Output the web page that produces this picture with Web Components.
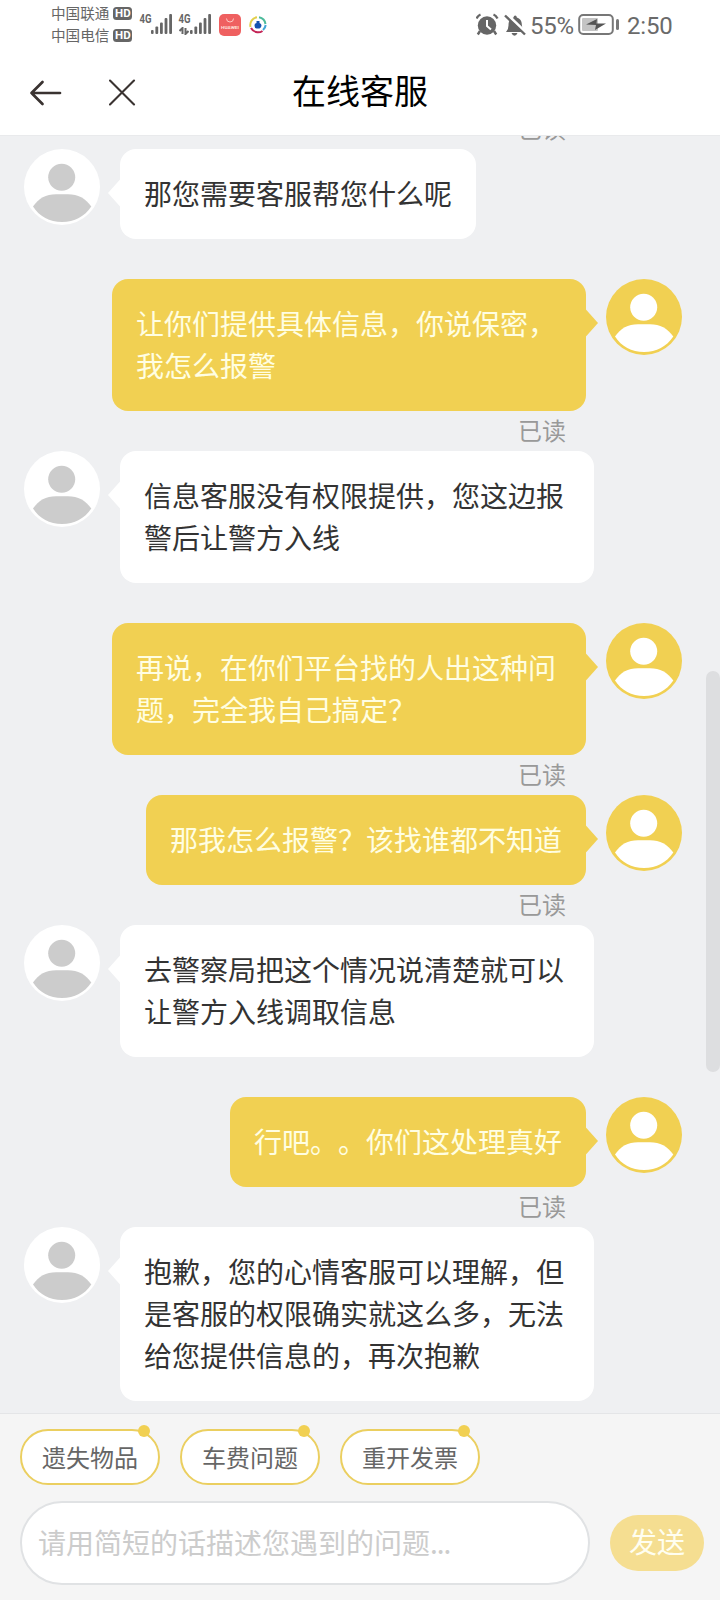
<!DOCTYPE html>
<html lang="zh-CN">
<head>
<meta charset="utf-8">
<title>在线客服</title>
<style>
html,body{margin:0;height:100%}
body{font-family:"Noto Sans CJK SC",sans-serif;background:#eff0f2;overflow:hidden;text-spacing-trim:space-all}
</style>
</head>
<body>
<chat-app>
  <status-bar slot="status"></status-bar>
  <nav-bar slot="nav">在线客服</nav-bar>
  <read-label>已读</read-label>
  <chat-message>那您需要客服帮您什么呢</chat-message>
  <chat-message mine>让你们提供具体信息，你说保密，我怎么报警</chat-message>
  <read-label>已读</read-label>
  <chat-message>信息客服没有权限提供，您这边报警后让警方入线</chat-message>
  <chat-message mine>再说，在你们平台找的人出这种问题，完全我自己搞定？</chat-message>
  <read-label>已读</read-label>
  <chat-message mine>那我怎么报警？该找谁都不知道</chat-message>
  <read-label>已读</read-label>
  <chat-message>去警察局把这个情况说清楚就可以让警方入线调取信息</chat-message>
  <chat-message mine>行吧。。你们这处理真好</chat-message>
  <read-label>已读</read-label>
  <chat-message>抱歉，您的心情客服可以理解，但是客服的权限确实就这么多，无法给您提供信息的，再次抱歉</chat-message>
  <chat-footer slot="footer">
    <quick-chip slot="chips">遗失物品</quick-chip>
    <quick-chip slot="chips">车费问题</quick-chip>
    <quick-chip slot="chips">重开发票</quick-chip>
  </chat-footer>
</chat-app>
<script>
const define = (name, html) => {
  const t = document.createElement('template');
  t.innerHTML = html;
  customElements.define(name, class extends HTMLElement {
    constructor() {
      super();
      this.attachShadow({mode: 'open'}).append(t.content.cloneNode(true));
    }
  });
};

define('chat-app', `
<style>
:host{display:flex;flex-direction:column;width:720px;height:1600px;background:#eff0f2}
main{flex:1;min-height:0;overflow:hidden;position:relative}
.list{display:flex;flex-direction:column;margin-top:13px}
.thumb{position:absolute;left:706px;top:535px;width:14px;height:401px;border-radius:7px;background:#dddee0}
</style>
<slot name="status"></slot><slot name="nav"></slot>
<main><div class="list"><slot></slot></div><div class="thumb"></div></main>
<slot name="footer"></slot>`);

define('hd-badge', `
<style>
:host{display:flex;align-items:center;justify-content:center;width:19px;height:13px;border-radius:3.5px;background:#666;color:#fff;font:bold 11.5px/13px Roboto,sans-serif}
</style><slot></slot>`);

define('signal-bars', `
<style>:host{display:block;width:24px;height:24px}svg{display:block;overflow:visible}text{font:bold 12.5px Roboto,sans-serif}</style>
<svg width="34" height="24" fill="#666">
<text x="-.5" y="11" textLength="12" lengthAdjust="spacingAndGlyphs">4G</text>
<g><rect x="11" y="18" width="2.6" height="4" rx="1"/><rect x="15.400" y="14.500" width="2.800" height="7.500" rx="1"/><rect x="20" y="10.500" width="2.800" height="11.500" rx="1"/><rect x="24.600" y="6" width="2.800" height="16" rx="1"/><rect x="29.200" y="2" width="2.800" height="20" rx="1"/></g>
</svg>`);

define('data-arrows', `
<style>:host{display:block;width:10px;height:8px}svg{display:block}</style>
<svg width="10" height="8" fill="none" stroke="#666" stroke-width="2"><path d="M3.5 7V1L.5 4M6.500 1v6l3-3"/></svg>`);

define('status-bar', `
<style>
:host{display:flex;align-items:flex-start;box-sizing:border-box;height:50px;padding:2px 0 0 51px;background:#fff;color:#666}
.carriers{display:flex;flex-direction:column}
.c{display:flex;align-items:center;gap:4px;height:22px;font-size:14.6px;line-height:22px;width:89px}
.sig{display:flex;width:39px;margin-top:10px;position:relative}
data-arrows{position:absolute;left:0;top:15px}
.app{margin:12px 0 0 1px}
.ring{margin:14px 0 0 8px}
svg{display:block}
.right{display:flex;align-items:center;margin-left:auto;height:46px;padding-right:49px}
.n{font:400 24px/30px Roboto,sans-serif;white-space:nowrap;width:44px;padding-top:2px;color:#6a6a6a;letter-spacing:-.2px}
</style>
<div class="carriers"><div class="c">中国联通<hd-badge>HD</hd-badge></div><div class="c">中国电信<hd-badge>HD</hd-badge></div></div>
<div class="sig"><signal-bars></signal-bars></div>
<div class="sig"><signal-bars></signal-bars><data-arrows></data-arrows></div>
<svg class="app" width="22" height="22"><rect width="22" height="22" rx="5" fill="#ef6060"/><path d="M7.500 4.500a3.500 3.500 0 0 0 7 0" fill="none" stroke="#ffc9c4" stroke-width="1"/><text x="2" y="14.500" textLength="18" lengthAdjust="spacingAndGlyphs" font-family="Roboto" font-size="4.200" font-weight="bold" fill="#ffe0dc">HUAWEI</text></svg>
<svg class="ring" width="18" height="18" fill="none" stroke-width="2"><path d="M8 1.200A8 8 0 0 0 1.500 11" stroke="#e2cf4a"/><path d="M10 1.200A8 8 0 0 1 16.500 8" stroke="#4dbb9b"/><path d="M16.700 9A8 8 0 0 1 14 14" stroke="#42a6d8"/><path d="M2 12A8 8 0 0 0 13.500 15" stroke="#c32455"/><path d="M7.500 5h3v2q2 .5 2 2.500T10.500 12.500h-3Q5.500 12 5.500 9.500T7.500 7z" fill="#1553b0"/></svg>
<div class="right">
<svg width="54" height="24" viewBox="0 0 54 24">
 <g fill="#666"><circle cx="11" cy="12.500" r="9.200"/><path d="M4 18l-2.200 3.500M18 18l2.200 3.500" stroke="#666" stroke-width="2.400"/></g>
 <path d="M.5 5.500Q2 2.500 4.500 1.500M21.500 5.500Q20 2.500 17.500 1.500" fill="none" stroke="#666" stroke-width="2.400"/>
 <path d="M11 7v6l4 3.500" fill="none" stroke="#fff" stroke-width="2"/>
 <path d="M30 19q2.500-2.500 2.500-6.500c0-5 2-7 5-8q.3-2 1.700-2t1.700 2c3 1 5 3 5 8q0 4 2.500 6.500z" fill="#666"/>
 <path d="M35.500 20h6q-1 2.700-3 2.700t-3-2.700" fill="#666"/>
 <path d="M30 .5l21 20" stroke="#fff" stroke-width="3"/><path d="M29 2.500l20 19" stroke="#666" stroke-width="2.400"/>
</svg>
<div class="n">55%</div>
<svg style="margin-left:4px" width="42" height="24" viewBox="0 0 42 24"><rect x="1.200" y="2" width="33.600" height="19" rx="4" fill="none" stroke="#777" stroke-width="2"/><rect x="4" y="5" width="16" height="13" rx="1" fill="#c4c4c4"/><path d="M8 11.500l11-5.500-.5 4.500h9.500l-11 6.500 1-5z" fill="#555"/><rect x="38" y="6" width="3" height="11" rx="1.500" fill="#777"/></svg>
<div class="n" style="margin-left:7px">2:50</div>
</div>`);

define('nav-bar', `
<style>
:host{display:grid;grid-template-columns:140px 1fr 140px;align-items:center;height:85px;background:#fff;border-bottom:1px solid #e9eaec;font-size:34px;color:#000}
.t{text-align:center;line-height:50px;padding-bottom:5px}
.icons{display:flex;align-items:center;padding-left:29px;gap:47px}
svg{display:block}
</style>
<div class="icons">
<svg width="33" height="26" fill="none" stroke="#3a3331" stroke-width="2.700" stroke-linecap="round" stroke-linejoin="round"><path d="M13.500 2L2.500 13l11 11M2.500 13H31"/></svg>
<svg width="27" height="27" fill="none" stroke="#3a3331" stroke-width="2.100" stroke-linecap="round"><path d="M1 1.500l24 24M25 1.500l-24 24"/></svg>
</div><div class="t"><slot></slot></div>`);

define('read-label', `
<style>
:host{display:block;height:40px;line-height:38px;font-size:24px;color:#999;text-align:right;padding-right:154px;margin-top:-40px}
</style><slot></slot>`);

define('user-avatar', `
<style>:host{display:block;flex:none;width:76px;height:76px}svg{display:block}</style>
<svg width="76" height="76"><circle cx="38" cy="38" r="38" fill="var(--disc,#fff)"/><g fill="var(--figure,#ccc)"><circle cx="37.700" cy="28.300" r="13.500"/><path d="M9 57.500C14.500 49.500 22 45.300 32 45.300H44C54 45.300 61.500 49.500 67.300 57.500C60.500 67.500 50.500 73 38 73S15.500 67.500 9 57.500z"/></g></svg>`);

define('chat-message', `
<style>
:host{display:flex;gap:20px;padding:0 38px 0 24px;margin-bottom:40px;--bubble:#fff;color:#333}
:host([mine]){flex-direction:row-reverse;--bubble:#f1d052;--disc:#f1d052;--figure:#fff;color:#fffee2}
.b{position:relative;box-sizing:border-box;max-width:474px;padding:23px 24px 25px;border-radius:16px;background:var(--bubble);font-size:28px;line-height:42px;word-break:break-all}
.b::before{content:"";position:absolute;top:30px;left:-12px;width:12.500px;height:28px;background:var(--bubble);clip-path:polygon(100% 0,0 50%,100% 100%)}
:host([mine]) .b::before{left:auto;right:-12px;clip-path:polygon(0 0,100% 50%,0 100%)}
</style>
<user-avatar></user-avatar><div class="b"><slot></slot></div>`);

define('quick-chip', `
<style>
:host{display:flex;align-items:center;justify-content:center;position:relative;box-sizing:border-box;width:140px;height:56px;border:2px solid #ebcf60;border-radius:28px;background:#fff;font-size:24px;line-height:34px;color:#666}
i{position:absolute;top:-6px;right:8px;width:12px;height:12px;border-radius:50%;background:#f1d052}
</style><span><slot></slot></span><i></i>`);

define('chat-footer', `
<style>
:host{display:flex;flex-direction:column;gap:16px;box-sizing:border-box;height:187px;padding:15px 16px 15px 20px;border-top:1px solid #e4e5e7;background:#f5f5f5}
.chips{display:flex;gap:20px}
.row{display:flex;align-items:center;gap:20px}
.in{flex:1;box-sizing:border-box;height:84px;border:2px solid #e0e2e4;border-radius:42px;background:#fff;padding:0 0 0 16px;font-size:28px;line-height:79px;color:#ccc}
.in span{letter-spacing:-1px}
.send{width:94px;height:56px;border-radius:28px;background:#f5de91;color:#fffef0;font-size:28px;line-height:53px;text-align:center}
</style>
<div class="chips"><slot name="chips"></slot></div>
<div class="row"><div class="in">请用简短的话描述您遇到的问题<span>...</span></div><div class="send">发送</div></div>`);
</script>
</body>
</html>
